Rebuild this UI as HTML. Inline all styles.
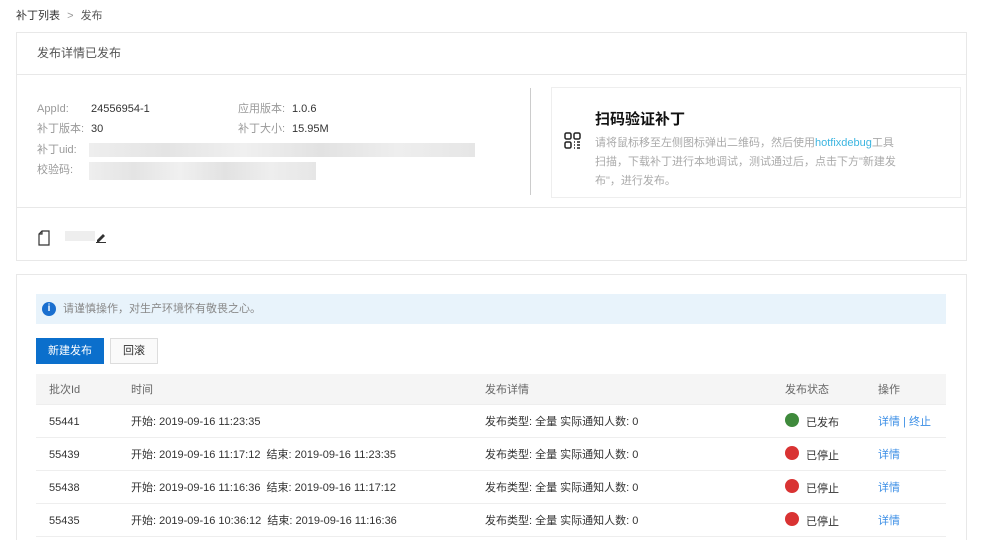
<!DOCTYPE html>
<html><head><meta charset="utf-8"><style>
*{margin:0;padding:0;box-sizing:border-box}
html{width:984px;height:540px;overflow:hidden}
body{width:984px;height:540px;background:#fff;font-family:"Liberation Sans","Noto Sans CJK SC",sans-serif;font-size:11px;color:#333;position:relative;overflow:hidden}
.a{position:absolute;white-space:nowrap;line-height:14px}
.g{color:#999}
.blur{position:absolute;height:14px;background:linear-gradient(90deg,#eee,#e4e4e4 20%,#f0f0f0 40%,#e2e2e2 60%,#eee 80%,#e6e6e6)}
.row{position:absolute;left:36px;width:910px;height:33px;border-bottom:1px solid #eee}
.dot{position:absolute;width:14px;height:14px;border-radius:50%}
.lk{color:#3a8ee6}
</style></head><body>
<div class="a" style="left:16px;top:9px;color:#333">补丁列表 <span style="color:#999;margin:0 4px">&gt;</span> <span style="color:#555">发布</span></div>
<div class="a" style="left:16px;top:32px;width:951px;height:229px;border:1px solid #e8e8e8"></div>
<div class="a" style="left:17px;top:74px;width:949px;height:1px;background:#e8e8e8"></div>
<div class="a" style="left:17px;top:207px;width:949px;height:1px;background:#e8e8e8"></div>
<div class="a" style="left:37px;top:46px;font-size:12px;color:#555">发布详情已发布</div>
<div class="a g" style="left:37px;top:102px">AppId:</div><div class="a" style="left:91px;top:102px">24556954-1</div>
<div class="a g" style="left:238px;top:102px">应用版本:</div><div class="a" style="left:292px;top:102px">1.0.6</div>
<div class="a g" style="left:37px;top:122px">补丁版本:</div><div class="a" style="left:91px;top:122px">30</div>
<div class="a g" style="left:238px;top:122px">补丁大小:</div><div class="a" style="left:292px;top:122px">15.95M</div>
<div class="a g" style="left:37px;top:143px">补丁uid:</div><div class="blur" style="left:89px;top:143px;width:386px"></div>
<div class="a g" style="left:37px;top:163px">校验码:</div><div class="blur" style="left:89px;top:162px;width:227px;height:18px"></div>
<div class="a" style="left:530px;top:88px;width:1px;height:107px;background:#ccc"></div>
<div class="a" style="left:551px;top:87px;width:410px;height:111px;border:1px solid #eee"></div>
<svg class="a" style="left:564px;top:132px" width="17" height="17" viewBox="0 0 17 17" fill="none" stroke="#222" stroke-width="1.5"><rect x="1" y="1" width="6" height="6" rx="1.5"/><rect x="10" y="1" width="6" height="6" rx="1.5"/><rect x="1" y="10" width="6" height="6" rx="1.5"/><path d="M10 10h1M13 10h3M10 13h1M13 13h3M10 16h1M13 16h3"/></svg>
<div class="a" style="left:595px;top:110px;font-size:15px;line-height:20px;font-weight:bold;color:#111">扫码验证补丁</div>
<div class="a" style="left:595px;top:134px;width:303px;white-space:normal;color:#aaa;line-height:19px;font-size:11px">请将鼠标移至左侧图标弹出二维码，然后使用<span style="color:#3bb5e0">hotfixdebug</span>工具扫描，下载补丁进行本地调试，测试通过后，点击下方"新建发布"，进行发布。</div>
<svg class="a" style="left:38px;top:230px" width="12" height="16" viewBox="0 0 12 16" fill="none" stroke="#333" stroke-width="1.2"><path d="M4 1h7v14H1V4z M1 4h3V1"/></svg>
<div class="blur" style="left:65px;top:231px;width:30px;height:10px;background:#eee"></div>
<svg class="a" style="left:95px;top:231px" width="12" height="12" viewBox="0 0 12 12"><path d="M2 9l6-6 2 2-6 6H2z" fill="#333"/><path d="M1 11.5h10" stroke="#333"/></svg>
<div class="a" style="left:16px;top:274px;width:951px;height:270px;border:1px solid #e8e8e8"></div>
<div class="a" style="left:36px;top:294px;width:910px;height:30px;background:#e8f3fb"></div>
<div class="a" style="left:42px;top:302px;width:14px;height:14px;border-radius:50%;background:#1a6fcf;color:#fff;font-size:10px;font-weight:bold;text-align:center;line-height:14px">i</div>
<div class="a" style="left:63px;top:302px;color:#888">请谨慎操作，对生产环境怀有敬畏之心。</div>
<div class="a" style="left:36px;top:338px;width:68px;height:26px;background:#0b6fcc;color:#fff;text-align:center;line-height:26px">新建发布</div>
<div class="a" style="left:110px;top:338px;width:48px;height:26px;border:1px solid #ddd;background:#fafafa;text-align:center;line-height:24px">回滚</div>
<div class="a" style="left:36px;top:374px;width:910px;height:31px;background:#f5f5f5;border-bottom:1px solid #eee"></div>
<div class="a" style="left:49px;top:383px;color:#666">批次Id</div>
<div class="a" style="left:131px;top:383px;color:#666">时间</div>
<div class="a" style="left:485px;top:383px;color:#666">发布详情</div>
<div class="a" style="left:785px;top:383px;color:#666">发布状态</div>
<div class="a" style="left:878px;top:383px;color:#666">操作</div>

<div class="row" style="top:405px"></div>
<div class="a" style="left:49px;top:415px">55441</div><div class="a" style="left:131px;top:415px">开始: 2019-09-16 11:23:35</div>
<div class="a" style="left:485px;top:415px">发布类型: 全量 实际通知人数: 0</div>
<div class="dot" style="left:785px;top:413px;background:#3f8a3c"></div><div class="a" style="left:806px;top:416px">已发布</div>
<div class="a lk" style="left:878px;top:415px">详情 | 终止</div>

<div class="row" style="top:438px"></div>
<div class="a" style="left:49px;top:448px">55439</div><div class="a" style="left:131px;top:448px">开始: 2019-09-16 11:17:12&nbsp; 结束: 2019-09-16 11:23:35</div>
<div class="a" style="left:485px;top:448px">发布类型: 全量 实际通知人数: 0</div>
<div class="dot" style="left:785px;top:446px;background:#d93333"></div><div class="a" style="left:806px;top:449px">已停止</div>
<div class="a lk" style="left:878px;top:448px">详情</div>

<div class="row" style="top:471px"></div>
<div class="a" style="left:49px;top:481px">55438</div><div class="a" style="left:131px;top:481px">开始: 2019-09-16 11:16:36&nbsp; 结束: 2019-09-16 11:17:12</div>
<div class="a" style="left:485px;top:481px">发布类型: 全量 实际通知人数: 0</div>
<div class="dot" style="left:785px;top:479px;background:#d93333"></div><div class="a" style="left:806px;top:482px">已停止</div>
<div class="a lk" style="left:878px;top:481px">详情</div>

<div class="row" style="top:504px"></div>
<div class="a" style="left:49px;top:514px">55435</div><div class="a" style="left:131px;top:514px">开始: 2019-09-16 10:36:12&nbsp; 结束: 2019-09-16 11:16:36</div>
<div class="a" style="left:485px;top:514px">发布类型: 全量 实际通知人数: 0</div>
<div class="dot" style="left:785px;top:512px;background:#d93333"></div><div class="a" style="left:806px;top:515px">已停止</div>
<div class="a lk" style="left:878px;top:514px">详情</div>
</body></html>
